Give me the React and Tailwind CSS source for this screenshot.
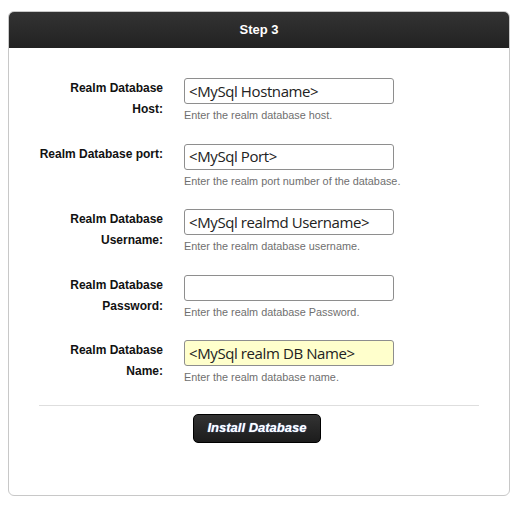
import React from "react";

const rows = [
  { label: ["Realm Database", "Host:"], value: "<MySql Hostname>", help: "Enter the realm database host." },
  { label: ["Realm Database port:"], value: "<MySql Port>", help: "Enter the realm port number of the database." },
  { label: ["Realm Database", "Username:"], value: "<MySql realmd Username>", help: "Enter the realm database username." },
  { label: ["Realm Database", "Password:"], value: "", help: "Enter the realm database Password." },
  { label: ["Realm Database", "Name:"], value: "<MySql realm DB Name>", help: "Enter the realm database name.", yellow: true },
];

export default function App() {
  return (
    <div className="bg-white w-[523px] h-[508px] pt-[11px] pl-[8px]" style={{ fontFamily: '"Liberation Sans", Arial, sans-serif' }}>
      <div className="w-[502px] h-[485px] border border-[#c8c8c8] rounded-[6px] bg-white overflow-hidden flex flex-col">
        <div className="h-[36px] bg-gradient-to-b from-[#333333] to-[#222222] flex items-center justify-center text-white font-bold text-[13px]">
          Step 3
        </div>
        <div className="pt-[30px] flex flex-col">
          {rows.map((r, i) => (
            <div key={i} className="h-[65.5px] flex">
              <div className="w-[154px] text-right font-bold text-[12px] leading-[21px] text-[#111]">
                {r.label.map((l, j) => (
                  <div key={j}>{l}</div>
                ))}
              </div>
              <div className="ml-[21px] flex flex-col">
                <div
                  className={`w-[210px] h-[26px] border border-[#8e8e8e] rounded-[3px] pl-[4px] flex items-center text-[15px] text-[#222] ${r.yellow ? "bg-[#ffffcc]" : "bg-white"}`}
                  style={{ fontFamily: '"Open Sans", "DejaVu Sans", sans-serif', letterSpacing: "-0.4px" }}
                >
                  {r.value}
                </div>
                <div className="mt-[4px] text-[10.85px] leading-[14px] text-[#6f6f6f]">{r.help}</div>
              </div>
            </div>
          ))}
          <div className="mx-[30px] -mt-px h-px bg-[#dedede]" />
          <div className="flex mt-[8px]">
            <button className="ml-[184px] w-[128px] h-[29px] rounded-[5px] border border-black bg-gradient-to-b from-[#333333] to-[#1c1c1c] text-white italic font-bold text-[13px] flex items-center justify-center [text-shadow:0_0_1px_#8ab4ff]" style={{ fontFamily: '"Liberation Sans", Arial, sans-serif' }}>
              Install Database
            </button>
          </div>
        </div>
      </div>
    </div>
  );
}
